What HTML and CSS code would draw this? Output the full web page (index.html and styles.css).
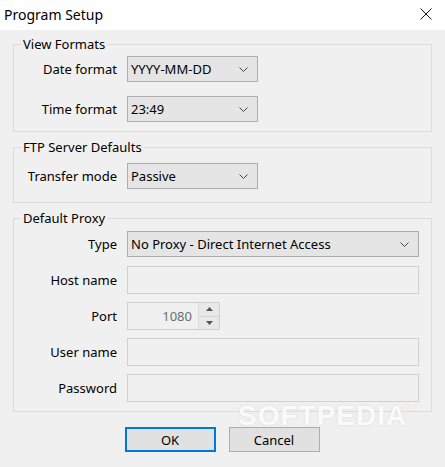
FILE: index.html
```html
<!DOCTYPE html>
<html lang="en">
<head>
  <meta charset="UTF-8">
  <title>Program Setup</title>
  <link rel="stylesheet" href="styles.css">
</head>
<body>
  <div class="window">
    <div class="titlebar">
      <span class="title">Program Setup</span>
      <span class="close">
        <svg width="12" height="12" viewBox="0 0 12 12"><path d="M0.5 0.5 L11.5 11.5 M11.5 0.5 L0.5 11.5" stroke="#111" stroke-width="1" fill="none"/></svg>
      </span>
    </div>
    <div class="content">
      <fieldset class="group group-view">
        <legend>View Formats</legend>
        <div class="row">
          <label>Date format</label>
          <div class="select short"><span>YYYY-MM-DD</span><svg width="9" height="5" viewBox="0 0 9 5"><path d="M0.5 0.5 L4.5 4.5 L8.5 0.5" stroke="#444" fill="none"/></svg></div>
        </div>
        <div class="row">
          <label>Time format</label>
          <div class="select short"><span>23:49</span><svg width="9" height="5" viewBox="0 0 9 5"><path d="M0.5 0.5 L4.5 4.5 L8.5 0.5" stroke="#444" fill="none"/></svg></div>
        </div>
      </fieldset>
      <fieldset class="group group-ftp">
        <legend>FTP Server Defaults</legend>
        <div class="row">
          <label>Transfer mode</label>
          <div class="select short"><span>Passive</span><svg width="9" height="5" viewBox="0 0 9 5"><path d="M0.5 0.5 L4.5 4.5 L8.5 0.5" stroke="#444" fill="none"/></svg></div>
        </div>
      </fieldset>
      <fieldset class="group group-proxy">
        <legend>Default Proxy</legend>
        <div class="row">
          <label>Type</label>
          <div class="select"><span>No Proxy - Direct Internet Access</span><svg width="9" height="5" viewBox="0 0 9 5"><path d="M0.5 0.5 L4.5 4.5 L8.5 0.5" stroke="#444" fill="none"/></svg></div>
        </div>
        <div class="row row-first">
          <label>Host name</label>
          <div class="input"></div>
        </div>
        <div class="row">
          <label>Port</label>
          <div class="input port">
            <span class="value">1080</span>
            <div class="spin">
              <span class="spin-btn"><svg width="7" height="4" viewBox="0 0 7 4"><path d="M0 4 L3.5 0 L7 4 Z" fill="#555"/></svg></span>
              <span class="spin-btn"><svg width="7" height="4" viewBox="0 0 7 4"><path d="M0 0 L3.5 4 L7 0 Z" fill="#555"/></svg></span>
            </div>
          </div>
        </div>
        <div class="row">
          <label>User name</label>
          <div class="input"></div>
        </div>
        <div class="row">
          <label>Password</label>
          <div class="input"></div>
        </div>
      </fieldset>
      <div class="buttons">
        <button class="btn btn-default">OK</button>
        <button class="btn">Cancel</button>
      </div>
    </div>
    <div class="watermark">SOFTPEDIA<span class="reg">®</span></div>
  </div>
</body>
</html>
```

FILE: styles.css
```css
body {
  margin: 0;
  font-family: "Noto Sans", "Open Sans", sans-serif;
  font-size: 13px;
  color: #000;
}
.window {
  position: relative;
  width: 445px;
  height: 467px;
  background: #f0f0f0;
  overflow: hidden;
}
.titlebar {
  height: 30px;
  background: #fff;
  display: flex;
  align-items: center;
  justify-content: space-between;
  padding: 0 13px 0 4px;
}
.title {
  font-size: 14px;
  margin-top: -2px;
}
.close {
  display: flex;
  margin-top: -3px;
}
.content {
  padding: 6px 13px 0;
}
.group {
  margin: 0;
  border: 1px solid #dcdcdc;
  padding: 0 12px 9px 0;
  min-width: 0;
}
.group legend {
  margin-left: 7px;
  padding: 0 2px;
  line-height: 16px;
}
.group-view {
  padding-top: 4px;
}
.group-ftp {
  margin-top: 7px;
  padding-top: 8px;
  padding-bottom: 13px;
}
.group-proxy {
  margin-top: 7px;
  padding-top: 5px;
}
.row {
  display: grid;
  grid-template-columns: 103px 1fr;
  column-gap: 10px;
  align-items: center;
  margin-top: 8px;
}
.row:first-of-type {
  margin-top: 0;
}
.group-view .row + .row {
  margin-top: 14px;
}
.row.row-first {
  margin-top: 9px;
}
.row label {
  text-align: right;
}
.select {
  height: 26px;
  box-sizing: border-box;
  background: #e5e5e5;
  border: 1px solid #adadad;
  display: flex;
  align-items: center;
  justify-content: space-between;
  padding: 0 9px 0 3px;
}
.select.short {
  width: 131px;
}
.input {
  height: 28px;
  box-sizing: border-box;
  background: #f0f0f0;
  border: 1px solid #d0d0d0;
}
.input.port {
  width: 93px;
  display: flex;
  align-items: stretch;
  justify-content: flex-end;
}
.port .value {
  color: #6d6d6d;
  align-self: center;
  padding-right: 6px;
}
.spin {
  width: 20px;
  display: flex;
  flex-direction: column;
  border-left: 1px solid #dcdcdc;
}
.spin-btn {
  flex: 1;
  display: flex;
  align-items: center;
  justify-content: center;
  background: #e8e8e8;
}
.spin-btn + .spin-btn {
  border-top: 1px solid #d4d4d4;
}
.buttons {
  display: flex;
  justify-content: center;
  gap: 13px;
  margin-top: 15px;
  padding-right: 1px;
}
.btn {
  width: 91px;
  height: 25px;
  font: inherit;
  background: #e1e1e1;
  border: 1px solid #adadad;
  padding: 0;
}
.btn-default {
  border: 2px solid #0078d7;
}
.watermark {
  position: absolute;
  left: 238px;
  top: 400px;
  font-family: "Liberation Sans", sans-serif;
  font-weight: bold;
  font-size: 28px;
  letter-spacing: 1px;
  color: rgba(255, 255, 255, 0.9);
  text-shadow: 0 0 2px rgba(190, 190, 190, 0.5);
  pointer-events: none;
}
.watermark .reg {
  font-size: 10px;
  vertical-align: top;
  position: relative;
  top: 1px;
  letter-spacing: 0;
}
```
